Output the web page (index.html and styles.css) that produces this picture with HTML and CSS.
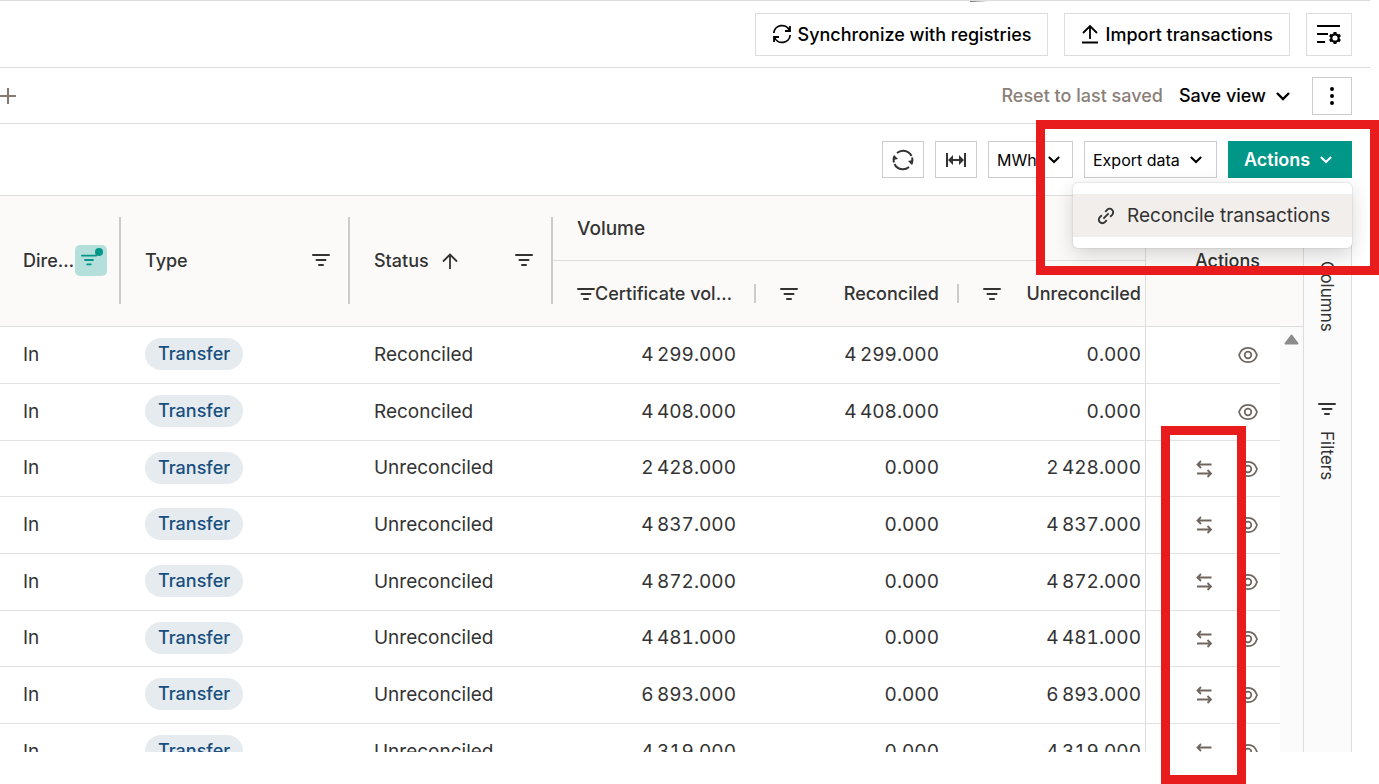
FILE: index.html
```html
<!DOCTYPE html>
<html lang="en">
<head>
    <meta charset="UTF-8">
    <meta name="viewport" content="width=device-width, initial-scale=1">
    <title>Transactions</title>
    <link rel="stylesheet" href="styles.css">
</head>

<body>
    <!-- shared icons -->
    <svg class="sprite" aria-hidden="true">
        <symbol id="filter" viewBox="0 0 18 14">
            <path d="M1 2h16M4.500 7h9M7 12h4" fill="none" stroke="currentColor" stroke-width="2" stroke-linecap="round"/>
        </symbol>
        <symbol id="chevron" viewBox="0 0 14 10">
            <path d="M1 2l6 6 6-6" fill="none" stroke="currentColor" stroke-width="2.400"/>
        </symbol>
        <symbol id="eye" viewBox="0 0 20 18">
            <path d="M1 9C2.500 4 6 1.800 10 1.800S17.500 4 19 9c-1.500 5-5 7.200-9 7.200S2.500 14 1 9z" fill="none" stroke="currentColor" stroke-width="1.700" stroke-linejoin="round"/>
            <circle cx="10" cy="9" r="3.300" fill="none" stroke="currentColor" stroke-width="1.700"/>
        </symbol>
        <symbol id="swap" viewBox="0 0 18 18">
            <path d="M16.500 4.500H2.500M6 1L2.500 4.500 6 8M2 13.500h14M12.500 10l3.500 3.500-3.500 3.500" fill="none" stroke="currentColor" stroke-width="1.800"/>
        </symbol>
    </svg>

    <div class="page">
        <header class="bar header-bar">
            <button class="button button-large">
                <svg width="20" height="20" viewBox="0 0 20 20" fill="none" stroke="currentColor" stroke-width="1.800">
                    <path d="M1.800 9A8.200 8.200 0 0 1 17.500 6.500M18 2v5h-5M18.200 11A8.200 8.200 0 0 1 2.500 13.500M2 18v-5h5"/>
                </svg>
                Synchronize with registries
            </button>
            <button class="button button-large">
                <svg width="18" height="20" viewBox="0 0 18 20" fill="none" stroke="currentColor" stroke-width="1.800">
                    <path d="M9 15V2M2 9l7-7 7 7M1 18.500h16"/>
                </svg>
                Import transactions
            </button>
            <button class="button button-settings" aria-label="Settings">
                <svg width="26" height="22" viewBox="0 0 26 22" fill="none" stroke="currentColor" stroke-width="2.200">
                    <path d="M1 3h23M1 11h11M1 19h8"/>
                    <circle cx="19" cy="15" r="3.700"/>
                    <path d="M19 9v2M19 19v2M13.800 12l1.900 1.100M22.300 16.900l1.900 1.100M13.800 18l1.900-1.100M22.300 13.100l1.900-1.100" stroke-width="3"/>
                </svg>
            </button>
        </header>

        <div class="bar view-bar">
            <button class="plain add-view" aria-label="Add view">
                <svg width="16" height="16" viewBox="0 0 16 16" fill="none" stroke="currentColor" stroke-width="2">
                    <path d="M8 0v16M0 8h16"/>
                </svg>
            </button>
            <button class="plain reset">Reset to last saved</button>
            <button class="plain save">Save view <svg width="14" height="10"><use href="#chevron"/></svg></button>
            <button class="button button-more" aria-label="More">
                <svg width="4" height="18" viewBox="0 0 4 18" fill="currentColor">
                    <circle cx="2" cy="2" r="2"/><circle cx="2" cy="9" r="2"/><circle cx="2" cy="16" r="2"/>
                </svg>
            </button>
        </div>

        <div class="toolbar">
            <button class="button button-icon" aria-label="Refresh">
                <svg width="22" height="22" viewBox="0 0 22 22" fill="none" stroke="#333" stroke-width="2">
                    <path d="M2 13.500A9.300 9.300 0 0 1 2.500 7M5 4a9.300 9.300 0 0 1 14.500 3M20 8.500A9.300 9.300 0 0 1 19.500 15M17 18A9.300 9.300 0 0 1 2.500 15"/>
                    <path d="M1 11l1-5 4 4zM21 11l-1 5-4-4z" fill="#333" stroke="none"/>
                </svg>
            </button>
            <button class="button button-icon" aria-label="Fit columns">
                <svg width="22" height="14" viewBox="0 0 22 14" fill="none" stroke="#333" stroke-width="2">
                    <path d="M2 0v14M20 0v14M5 7h12"/>
                    <path d="M3 7l5-5v10zM19 7l-5-5v10z" fill="#333" stroke="none"/>
                </svg>
            </button>
            <div class="select">
                <select aria-label="Unit">
                    <option>MWh</option>
                </select>
                <svg width="12" height="9"><use href="#chevron"/></svg>
            </div>
            <button class="button button-export">Export data <svg width="12" height="9"><use href="#chevron"/></svg></button>
            <div class="actions">
                <button class="button-primary" aria-expanded="true">Actions <svg width="12" height="9"><use href="#chevron"/></svg></button>
                <div class="menu">
                    <button class="menu-item">
                        <svg width="18" height="18" viewBox="0 0 24 24" fill="none" stroke="currentColor" stroke-width="2.500">
                            <path d="M8.500 15.500l7-7M11 6.500l2.500-2.700a4.700 4.700 0 0 1 6.700 6.700L17.500 13M6.500 11l-2.700 2.500a4.700 4.700 0 0 0 6.700 6.700L13 17.500"/>
                        </svg>
                        Reconcile transactions
                    </button>
                </div>
            </div>
        </div>

        <div class="grid">
            <div class="grid-main">
                <table>
                    <colgroup>
                        <col class="col-direction">
                        <col>
                        <col class="col-wide">
                        <col class="col-wide">
                        <col class="col-wide">
                        <col class="col-unreconciled">
                        <col class="col-actions">
                        <col class="col-scroll">
                    </colgroup>
                    <thead>
                        <tr>
                            <th class="tall direction" rowspan="2"><div class="head">
                                <span>Direction</span>
                                <button class="plain filter-on" aria-label="Filter direction"><svg width="16" height="14"><use href="#filter"/></svg></button>
                            </div></th>
                            <th class="tall" rowspan="2"><div class="head">
                                <span>Type</span>
                                <button class="plain" aria-label="Filter type"><svg width="18" height="14"><use href="#filter"/></svg></button>
                            </div></th>
                            <th class="tall" rowspan="2"><div class="head">
                                <span>Status
                                    <svg class="sort" width="16" height="16" viewBox="0 0 16 16" fill="none" stroke="currentColor" stroke-width="1.800"><path d="M8 16V2M1 8.500L8 1.500l7 7"/></svg>
                                </span>
                                <button class="plain" aria-label="Filter status"><svg width="18" height="14"><use href="#filter"/></svg></button>
                            </div></th>
                            <th class="group" colspan="3">Volume</th>
                            <th class="pinned" rowspan="2" colspan="2">Actions</th>
                        </tr>
                        <tr>
                            <th class="short"><div class="head">
                                <button class="plain" aria-label="Filter certificate volume"><svg width="18" height="14"><use href="#filter"/></svg></button>
                                <span>Certificate volume</span>
                            </div></th>
                            <th class="short"><div class="head">
                                <button class="plain" aria-label="Filter reconciled"><svg width="18" height="14"><use href="#filter"/></svg></button>
                                <span>Reconciled</span>
                            </div></th>
                            <th class="last"><div class="head">
                                <button class="plain" aria-label="Filter unreconciled"><svg width="18" height="14"><use href="#filter"/></svg></button>
                                <span>Unreconciled</span>
                            </div></th>
                        </tr>
                    </thead>
                    <tbody>
                        <tr>
                            <td>In</td>
                            <td><span class="pill">Transfer</span></td>
                            <td>Reconciled</td>
                            <td class="num">4&#8239;299.000</td>
                            <td class="num">4&#8239;299.000</td>
                            <td class="num last">0.000</td>
                            <td class="pinned"><div class="row-actions">
                                <button class="plain" aria-label="View"><svg width="20" height="18"><use href="#eye"/></svg></button>
                            </div></td>
                            <td class="scroll" rowspan="8">
                                <svg width="15" height="11" viewBox="0 0 15 11"><path d="M1.500 9.500h12L7.500 1.500z" fill="#8b8b8b" stroke="#8b8b8b" stroke-width="2" stroke-linejoin="round"/></svg>
                            </td>
                        </tr>
                        <tr>
                            <td>In</td>
                            <td><span class="pill">Transfer</span></td>
                            <td>Reconciled</td>
                            <td class="num">4&#8239;408.000</td>
                            <td class="num">4&#8239;408.000</td>
                            <td class="num last">0.000</td>
                            <td class="pinned"><div class="row-actions">
                                <button class="plain" aria-label="View"><svg width="20" height="18"><use href="#eye"/></svg></button>
                            </div></td>
                        </tr>
                        <tr>
                            <td>In</td>
                            <td><span class="pill">Transfer</span></td>
                            <td>Unreconciled</td>
                            <td class="num">2&#8239;428.000</td>
                            <td class="num">0.000</td>
                            <td class="num last">2&#8239;428.000</td>
                            <td class="pinned"><div class="row-actions">
                                <button class="plain" aria-label="Reconcile"><svg width="18" height="18"><use href="#swap"/></svg></button>
                                <button class="plain" aria-label="View"><svg width="20" height="18"><use href="#eye"/></svg></button>
                            </div></td>
                        </tr>
                        <tr>
                            <td>In</td>
                            <td><span class="pill">Transfer</span></td>
                            <td>Unreconciled</td>
                            <td class="num">4&#8239;837.000</td>
                            <td class="num">0.000</td>
                            <td class="num last">4&#8239;837.000</td>
                            <td class="pinned"><div class="row-actions">
                                <button class="plain" aria-label="Reconcile"><svg width="18" height="18"><use href="#swap"/></svg></button>
                                <button class="plain" aria-label="View"><svg width="20" height="18"><use href="#eye"/></svg></button>
                            </div></td>
                        </tr>
                        <tr>
                            <td>In</td>
                            <td><span class="pill">Transfer</span></td>
                            <td>Unreconciled</td>
                            <td class="num">4&#8239;872.000</td>
                            <td class="num">0.000</td>
                            <td class="num last">4&#8239;872.000</td>
                            <td class="pinned"><div class="row-actions">
                                <button class="plain" aria-label="Reconcile"><svg width="18" height="18"><use href="#swap"/></svg></button>
                                <button class="plain" aria-label="View"><svg width="20" height="18"><use href="#eye"/></svg></button>
                            </div></td>
                        </tr>
                        <tr>
                            <td>In</td>
                            <td><span class="pill">Transfer</span></td>
                            <td>Unreconciled</td>
                            <td class="num">4&#8239;481.000</td>
                            <td class="num">0.000</td>
                            <td class="num last">4&#8239;481.000</td>
                            <td class="pinned"><div class="row-actions">
                                <button class="plain" aria-label="Reconcile"><svg width="18" height="18"><use href="#swap"/></svg></button>
                                <button class="plain" aria-label="View"><svg width="20" height="18"><use href="#eye"/></svg></button>
                            </div></td>
                        </tr>
                        <tr>
                            <td>In</td>
                            <td><span class="pill">Transfer</span></td>
                            <td>Unreconciled</td>
                            <td class="num">6&#8239;893.000</td>
                            <td class="num">0.000</td>
                            <td class="num last">6&#8239;893.000</td>
                            <td class="pinned"><div class="row-actions">
                                <button class="plain" aria-label="Reconcile"><svg width="18" height="18"><use href="#swap"/></svg></button>
                                <button class="plain" aria-label="View"><svg width="20" height="18"><use href="#eye"/></svg></button>
                            </div></td>
                        </tr>
                        <tr>
                            <td>In</td>
                            <td><span class="pill">Transfer</span></td>
                            <td>Unreconciled</td>
                            <td class="num">4&#8239;319.000</td>
                            <td class="num">0.000</td>
                            <td class="num last">4&#8239;319.000</td>
                            <td class="pinned"><div class="row-actions">
                                <button class="plain" aria-label="Reconcile"><svg width="18" height="18"><use href="#swap"/></svg></button>
                                <button class="plain" aria-label="View"><svg width="20" height="18"><use href="#eye"/></svg></button>
                            </div></td>
                        </tr>
                    </tbody>
                </table>
            </div>
            <aside class="sidebar">
                <button class="plain side-button">
                    <svg width="18" height="20" viewBox="0 0 18 20" fill="none" stroke="currentColor" stroke-width="2"><path d="M2 3h14v14H2zM7 3v14M11 3v14"/></svg>
                    <span>Columns</span>
                </button>
                <button class="plain side-button">
                    <svg width="18" height="20"><use href="#filter"/></svg>
                    <span>Filters</span>
                </button>
            </aside>
        </div>

        <!-- highlights -->
        <div class="mark mark-menu"></div>
        <div class="mark mark-rows"></div>
    </div>
</body>
</html>
```
FILE: styles.css
```css
* {
    box-sizing: border-box;
}

body {
    margin: 0;
    background: #fff;
    color: #333;
    font-family: Inter, "Liberation Sans", sans-serif;
    font-size: 18px;
}

button,
select {
    font: inherit;
    color: inherit;
    cursor: pointer;
}

svg {
    flex: none;
}

.sprite {
    position: absolute;
    width: 0;
    height: 0;
}

.page {
    position: relative;
    display: flex;
    flex-direction: column;
    height: 100vh;
    padding: 0 9px 32px 0;
    overflow: hidden;
}

/* buttons */
.plain {
    display: flex;
    align-items: center;
    padding: 0;
    border: none;
    background: none;
}

.button {
    display: flex;
    align-items: center;
    justify-content: center;
    height: 37px;
    padding: 0;
    background: #fff;
    border: 1px solid #ccc;
    color: #000;
}

.button-large {
    gap: 6px;
    height: 43px;
    padding: 0 16px;
    border-color: #ddd;
    font-weight: 550;
}

.button-settings {
    width: 46px;
    height: 43px;
    border-color: #ddd;
}

.button-more {
    width: 40px;
    height: 38px;
    margin-left: 6px;
}

.button-icon {
    width: 42px;
}

/* top bars */
.bar {
    display: flex;
    align-items: center;
    justify-content: flex-end;
    gap: 16px;
    padding-right: 18px;
    border-bottom: 1px solid #ddd;
}

.header-bar {
    position: relative;
    flex: none;
    height: 68px;
    border-top: 1px solid #ddd;
}

/* edge of the card above */
.header-bar::before {
    content: "";
    position: absolute;
    top: 0;
    left: 970px;
    width: 18px;
    height: 1px;
    background: linear-gradient(to right, #777, #fff);
}

.view-bar {
    flex: none;
    height: 56px;
}

.add-view {
    margin-right: auto;
    color: #857a72;
}

.reset {
    color: #8a8078;
    font-weight: 500;
}

.save {
    gap: 10px;
    color: #000;
    font-weight: 550;
}

.toolbar {
    flex: none;
    display: flex;
    align-items: center;
    justify-content: flex-end;
    gap: 11px;
    height: 71px;
    padding-right: 18px;
    font-size: 16px;
}

.select {
    position: relative;
    color: #000;
}

.select select {
    display: block;
    appearance: none;
    width: 85px;
    height: 37px;
    padding: 0 8px;
    background: #fff;
    border: 1px solid #ccc;
    border-radius: 0;
}

.select svg {
    position: absolute;
    top: 14px;
    right: 13px;
    pointer-events: none;
}

.button-export {
    justify-content: flex-start;
    gap: 10px;
    width: 133px;
    padding-left: 8px;
}

.actions {
    position: relative;
}

.button-primary {
    display: flex;
    align-items: center;
    gap: 10px;
    width: 124px;
    height: 37px;
    padding: 0 16px;
    border: none;
    background: #009688;
    color: #fff;
    font-size: 18px;
    font-weight: 600;
}

/* dropdown menu */
.menu {
    position: absolute;
    top: 42px;
    right: 0;
    z-index: 2;
    padding: 11px 0;
    background: #fff;
    border-radius: 5px;
    box-shadow: 0 0 2px rgba(0, 0, 0, 0.2), 0 6px 20px rgba(0, 0, 0, 0.16);
}

.menu-item {
    display: flex;
    align-items: center;
    gap: 12px;
    width: 279px;
    height: 43px;
    padding: 0 0 0 24px;
    border: none;
    background: #f2eeeb;
    font-size: 19px;
    white-space: nowrap;
}

/* grid */
.grid {
    flex: 1;
    display: flex;
    min-height: 0;
    margin-right: 18px;
    overflow: hidden;
    border-top: 1px solid #ddd;
}

.grid-main {
    flex: 1;
    min-width: 0;
}

table {
    width: 100%;
    table-layout: fixed;
    border-collapse: separate;
    border-spacing: 0;
}

.col-direction {
    width: 121px;
}

.col-wide {
    width: 203px;
}

.col-unreconciled {
    width: 186px;
}

.col-actions {
    width: 135px;
}

.col-scroll {
    width: 23px;
}

th {
    position: relative;
    height: 66px;
    padding: 0 20px 0 24px;
    background: #fbfaf8;
    border-bottom: 1px solid #ddd;
    font-weight: 550;
    text-align: left;
}

th.group {
    height: 65px;
    font-size: 19px;
    font-weight: 450;
}

th.tall,
th.pinned {
    padding-bottom: 2px;
}

th.direction {
    padding-right: 14px;
    padding-left: 23px;
}

th.last,
td.last {
    padding-right: 4px;
}

th.pinned {
    padding-right: 0;
    padding-left: 6px;
    text-align: center;
}

.pinned {
    border-left: 1px solid #ddd;
}

/* column resize handles */
.tall::after,
.short::after {
    content: "";
    position: absolute;
    top: 21px;
    right: -1px;
    width: 3px;
    height: 87px;
    background: #ccc;
}

.short::after {
    top: 23px;
    height: 19px;
}

.head {
    display: flex;
    align-items: center;
    justify-content: space-between;
}

.head span {
    overflow: hidden;
    text-overflow: ellipsis;
    white-space: nowrap;
}

.sort {
    margin-left: 8px;
    vertical-align: -2px;
}

.filter-on {
    position: relative;
    flex: none;
    width: 32px;
    height: 31px;
    padding-left: 6px;
    border-radius: 5px;
    background: #b5dfda;
    color: #009688;
}

.filter-on::after {
    content: "";
    position: absolute;
    top: 3px;
    right: 4px;
    width: 8px;
    height: 8px;
    border-radius: 50%;
    background: #009688;
}

td {
    height: 57px;
    padding: 0 20px 2px 24px;
    border-bottom: 1px solid #e2e2e2;
    font-size: 19px;
}

td:first-child {
    padding-left: 23px;
}

tr:nth-child(3n) td {
    height: 56px;
}

.num {
    text-align: right;
    font-variant-numeric: tabular-nums;
}

.pill {
    display: inline-block;
    height: 32px;
    padding: 0 13px;
    border-radius: 16px;
    background: #e6ebf0;
    color: #174f7e;
    font-size: 18px;
    font-weight: 500;
    line-height: 32px;
    vertical-align: middle;
}

td.pinned {
    padding: 0 16px 0 0;
    border-left-color: #ddd;
}

.row-actions {
    display: flex;
    justify-content: flex-end;
    gap: 12px;
    color: #70665f;
}

.row-actions button {
    justify-content: center;
    width: 32px;
    height: 32px;
}

td.scroll {
    padding: 7px 0 0;
    background: #fbfbfb;
    text-align: center;
    vertical-align: top;
    line-height: 10px;
}

/* side tabs */
.sidebar {
    display: flex;
    flex-direction: column;
    align-items: center;
    gap: 67px;
    width: 49px;
    padding: 33px 2px 0 0;
    background: #fbfbfb;
    border: 1px solid #ddd;
    border-width: 0 1px;
    font-size: 17px;
}

.side-button {
    flex-direction: column;
    gap: 12px;
}

.side-button span {
    writing-mode: vertical-rl;
}

/* red highlight frames */
.mark {
    position: absolute;
    z-index: 3;
    border: 9px solid #e81c1c;
    pointer-events: none;
}

.mark-menu {
    top: 120px;
    right: 0;
    width: 343px;
    height: 155px;
}

.mark-rows {
    top: 426px;
    right: 133px;
    width: 85px;
    height: 358px;
}
```
